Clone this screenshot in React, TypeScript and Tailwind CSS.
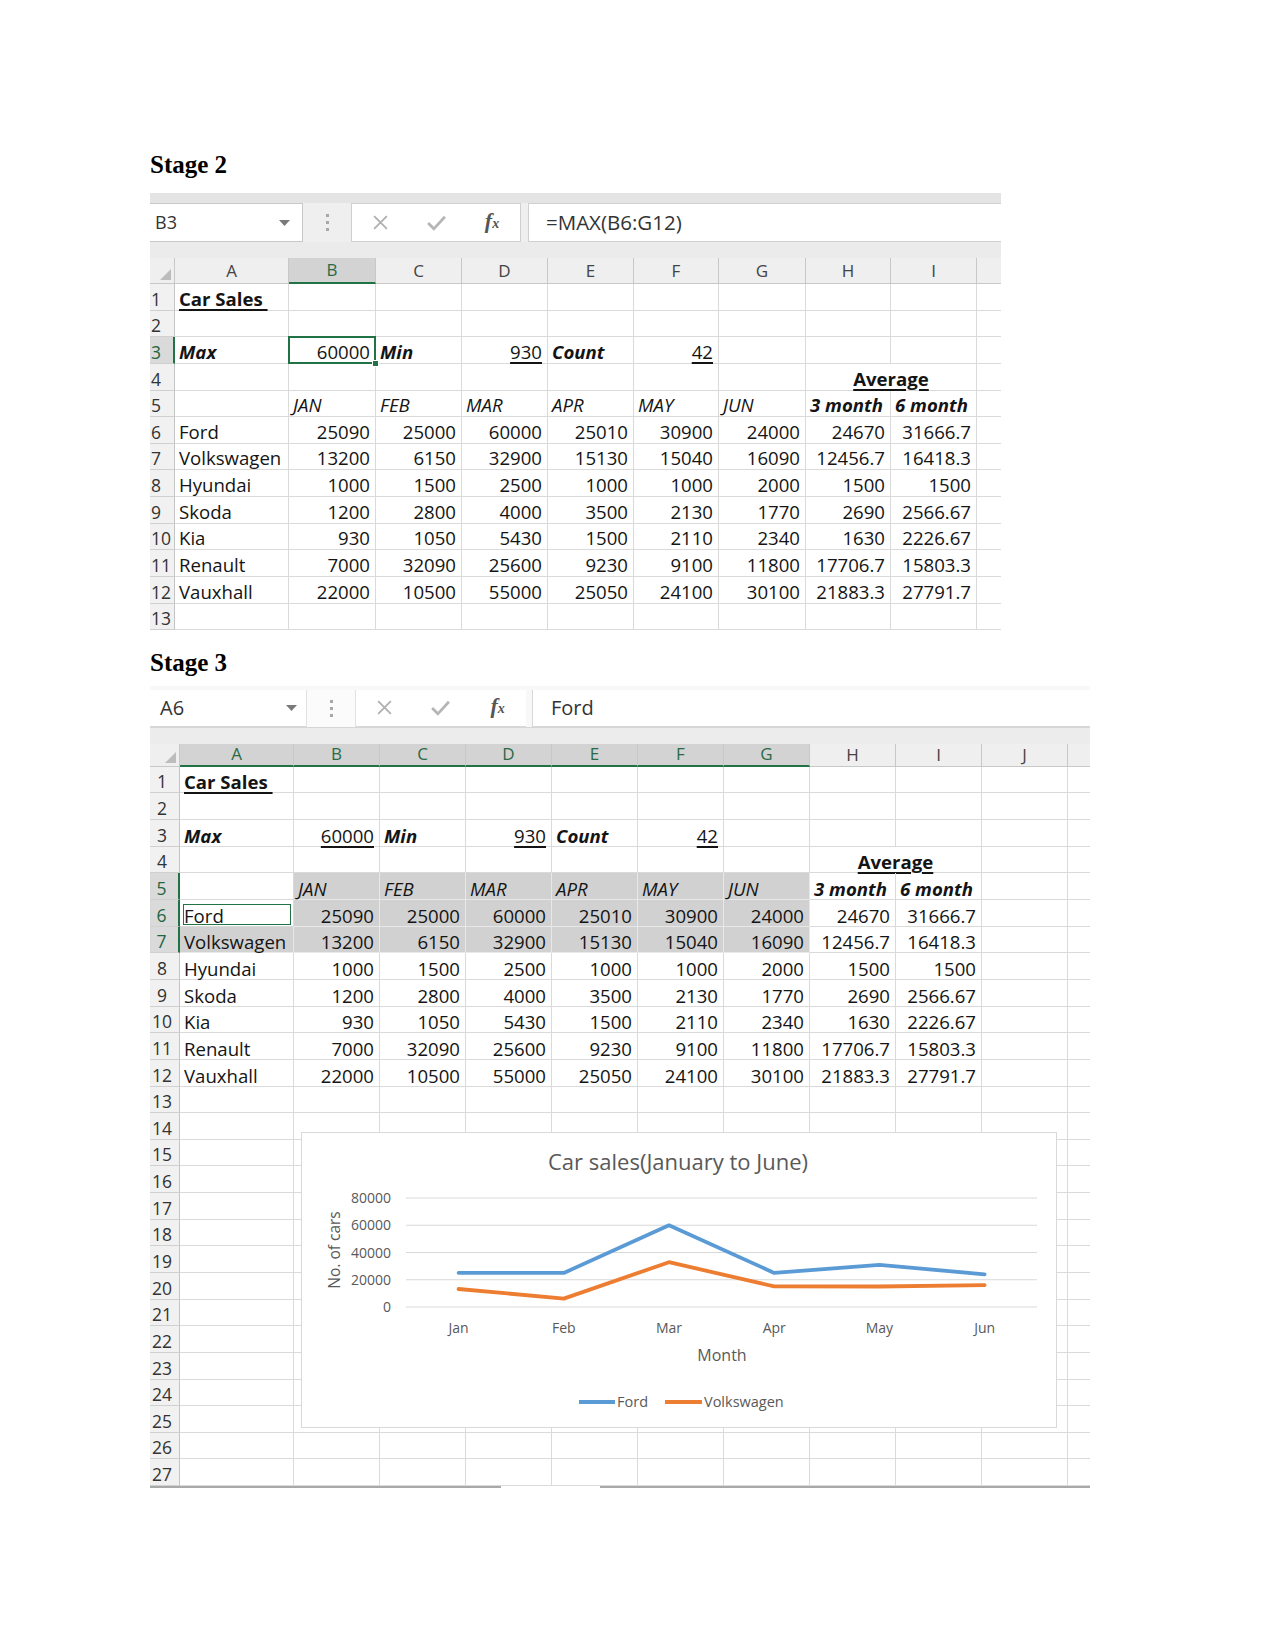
import React from 'react';

type Cell = {
  t?: string;
  a?: 'l' | 'r' | 'c';
  b?: boolean;
  i?: boolean;
  u?: boolean;
  span?: boolean;
  sel?: boolean;
  active?: boolean;
  pick?: boolean;
  extra?: boolean;
};

const months = ['JAN', 'FEB', 'MAR', 'APR', 'MAY', 'JUN'];
const data: [string, number[], string, string][] = [
  ['Ford', [25090, 25000, 60000, 25010, 30900, 24000], '24670', '31666.7'],
  ['Volkswagen', [13200, 6150, 32900, 15130, 15040, 16090], '12456.7', '16418.3'],
  ['Hyundai', [1000, 1500, 2500, 1000, 1000, 2000], '1500', '1500'],
  ['Skoda', [1200, 2800, 4000, 3500, 2130, 1770], '2690', '2566.67'],
  ['Kia', [930, 1050, 5430, 1500, 2110, 2340], '1630', '2226.67'],
  ['Renault', [7000, 32090, 25600, 9230, 9100, 11800], '17706.7', '15803.3'],
  ['Vauxhall', [22000, 10500, 55000, 25050, 24100, 30100], '21883.3', '27791.7'],
];

function buildRows(stage3: boolean): Cell[][] {
  const nData = stage3 ? 10 : 9;
  const fill = (cells: Cell[]) => {
    const r = [...cells];
    let count = cells.reduce((s, c) => s + (c.span ? 2 : 1), 0);
    while (count < nData) {
      r.push({});
      count++;
    }
    r.push({ extra: true });
    return r;
  };
  const rows: Cell[][] = [];
  rows.push(fill([{ t: 'Car Sales ', b: true, u: true }]));
  rows.push(fill([]));
  rows.push(
    fill([
      { t: 'Max', b: true, i: true },
      { t: '60000', a: 'r', u: true, pick: !stage3 },
      { t: 'Min', b: true, i: true },
      { t: '930', a: 'r', u: true },
      { t: 'Count', b: true, i: true },
      { t: '42', a: 'r', u: true },
    ])
  );
  rows.push(fill([{}, {}, {}, {}, {}, {}, {}, { t: 'Average', a: 'c', b: true, u: true, span: true }]));
  rows.push(
    fill([
      {},
      ...months.map((m) => ({ t: m, i: true, sel: stage3 })),
      { t: '3 month', b: true, i: true },
      { t: '6 month', b: true, i: true },
    ])
  );
  data.forEach(([name, nums, a3, a6], idx) => {
    const sel = stage3 && idx < 2;
    rows.push(
      fill([
        { t: name, sel: sel && idx === 1, active: sel && idx === 0 },
        ...nums.map((n) => ({ t: String(n), a: 'r' as const, sel })),
        { t: a3, a: 'r' },
        { t: a6, a: 'r' },
      ])
    );
  });
  rows.push(fill([]));
  if (stage3) for (let k = 14; k <= 27; k++) rows.push(fill([]));
  return rows;
}

function CellView({ c, stage3 }: { c: Cell; stage3: boolean }) {
  const cls = [
    'relative flex items-end whitespace-nowrap border-b text-[18.6px] text-[#141414]',
    stage3 ? 'leading-[21px]' : 'leading-[22px]',
    c.extra ? '' : 'border-r',
    c.span ? 'col-span-2' : '',
    c.sel ? 'bg-[#d1d1d1] border-[#e8e8e8]' : 'border-[#dadada]',
    c.a === 'r' ? 'justify-end pr-[5px]' : c.a === 'c' ? 'justify-center' : 'pl-[4px]',
  ].join(' ');
  const tcls = [
    'whitespace-pre',
    c.b ? 'font-bold' : '',
    c.i ? 'italic' : '',
    c.u ? 'underline decoration-[1.5px] underline-offset-[3px]' : '',
  ].join(' ');
  return (
    <div className={cls}>
      {c.t && <span className={tcls}>{c.t}</span>}
      {c.active && (
        <div className="absolute left-[3px] right-[2px] top-[4px] bottom-[1px] border-[1.5px] border-[#217346]" />
      )}
      {c.pick && (
        <>
          <div className="absolute -left-[1px] -right-[1px] -top-[1px] -bottom-[1px] z-10 border-2 border-[#217346]" />
          <div className="absolute -right-[4px] -bottom-[4px] z-20 h-[7px] w-[7px] border border-white bg-[#217346]" />
        </>
      )}
    </div>
  );
}

function RowHdr({ n, sel, stage3 }: { n: number; sel: boolean; stage3: boolean }) {
  return (
    <div
      className={[
        'flex items-end border-b border-b-[#d0d0d0] text-[17.5px] overflow-hidden',
        stage3 ? 'justify-center pr-[5px] leading-[21px]' : 'pl-[1px] leading-[22px]',
        sel
          ? 'bg-[#dadada] text-[#23653f] border-r-2 border-r-[#217346]'
          : 'bg-[#f1f1f1] text-[#333] border-r border-r-[#c4c4c4]',
      ].join(' ')}
    >
      {n}
    </div>
  );
}

function Corner() {
  return (
    <div className="relative border-r border-b border-[#c8c8c8] bg-[#efefef]">
      <svg className="absolute right-[3px] bottom-[3px]" width="11" height="11">
        <polygon points="11,0 11,11 0,11" fill="#bcbcbc" />
      </svg>
    </div>
  );
}

function Sheet({ stage3 }: { stage3: boolean }) {
  const rows = buildRows(stage3);
  const letters = stage3
    ? ['A', 'B', 'C', 'D', 'E', 'F', 'G', 'H', 'I', 'J']
    : ['A', 'B', 'C', 'D', 'E', 'F', 'G', 'H', 'I'];
  const colsCls = stage3
    ? 'grid-cols-[30px_114px_86px_86px_86px_86px_86px_86px_86px_86px_86px_22px]'
    : 'grid-cols-[25px_114px_87px_86px_86px_86px_85px_87px_85px_86px_24px]';
  const hdrSel = (i: number) => (stage3 ? i <= 6 : i === 1);
  const rowSel = (r: number) => (stage3 ? r >= 5 && r <= 7 : r === 3);
  return (
    <div>
      <div className={`grid ${colsCls} ${stage3 ? 'h-[23px]' : 'h-[26px]'}`}>
        <Corner />
        {letters.map((L, i) => (
          <div
            key={L}
            className={[
              'flex items-center justify-center border-r border-r-[#c8c8c8] text-[17px] leading-[20px]',
              hdrSel(i)
                ? 'bg-[#d3d3d3] text-[#2a6a45] border-b-2 border-b-[#217346]'
                : 'bg-[#efefef] text-[#444] border-b border-b-[#c8c8c8]',
            ].join(' ')}
          >
            {L}
          </div>
        ))}
        <div className="border-b border-b-[#c8c8c8] bg-[#efefef]" />
      </div>
      <div className={`grid ${colsCls} auto-rows-[26.65px]`}>
        {rows.map((row, r) => (
          <React.Fragment key={r}>
            <RowHdr n={r + 1} sel={rowSel(r + 1)} stage3={stage3} />
            {row.map((c, ci) => (
              <CellView key={ci} c={c} stage3={stage3} />
            ))}
          </React.Fragment>
        ))}
      </div>
    </div>
  );
}

function Tri() {
  return (
    <svg width="11" height="6" viewBox="0 0 11 6">
      <polygon points="0,0 11,0 5.5,6" fill="#7a7a7a" />
    </svg>
  );
}

function Dots() {
  return (
    <div className="flex flex-col gap-[4px]">
      <div className="h-[3px] w-[3px] bg-[#a8a8a8]" />
      <div className="h-[3px] w-[3px] bg-[#a8a8a8]" />
      <div className="h-[3px] w-[3px] bg-[#a8a8a8]" />
    </div>
  );
}

function FxIcons() {
  return (
    <div className="grid h-full grid-cols-3 items-center">
      <div className="flex justify-center">
        <svg width="17" height="17" viewBox="0 0 16 16">
          <path d="M2 2 L14 14 M14 2 L2 14" stroke="#b0b0b0" strokeWidth="1.7" fill="none" />
        </svg>
      </div>
      <div className="flex justify-center">
        <svg width="21" height="17" viewBox="0 0 20 16">
          <path d="M2 8.5 L7.5 14 L18 2.5" stroke="#b5b5b5" strokeWidth="2.6" fill="none" />
        </svg>
      </div>
      <div className="flex justify-center">
        <span className="font-['Liberation_Serif',serif] text-[22px] font-bold italic leading-[22px] text-[#555]">
          f<span className="text-[14px]">x</span>
        </span>
      </div>
    </div>
  );
}

function Chart() {
  const xs = [157.6, 262.8, 368, 473.2, 578.4, 683.6];
  const y = (v: number) => 175 - (v * 109) / 80000;
  const ford = [25090, 25000, 60000, 25010, 30900, 24000];
  const vw = [13200, 6150, 32900, 15130, 15040, 16090];
  const pts = (arr: number[]) => arr.map((v, i) => `${xs[i]},${y(v).toFixed(1)}`).join(' ');
  return (
    <div className="absolute left-[151px] top-[388px] h-[296px] w-[756px] border border-[#d9d9d9] bg-white">
      <svg width="754" height="294" className="absolute -left-[1px] -top-[1px] block overflow-visible font-['Open_Sans',sans-serif]">
        <text x="377" y="38" textAnchor="middle" fontSize="22" fill="#595959">
          Car sales(January to June)
        </text>
        {[0, 20000, 40000, 60000, 80000].map((v) => (
          <g key={v}>
            <line x1="105" x2="736" y1={y(v)} y2={y(v)} stroke="#d9d9d9" strokeWidth="1" />
            <text x="90" y={y(v) + 5} textAnchor="end" fontSize="14" fill="#595959">
              {v}
            </text>
          </g>
        ))}
        <text transform="translate(39,118) rotate(-90)" textAnchor="middle" fontSize="15.5" fill="#595959">
          No. of cars
        </text>
        <polyline points={pts(ford)} fill="none" stroke="#5b9bd5" strokeWidth="3.8" strokeLinejoin="round" strokeLinecap="round" />
        <polyline points={pts(vw)} fill="none" stroke="#ed7d31" strokeWidth="3.8" strokeLinejoin="round" strokeLinecap="round" />
        {['Jan', 'Feb', 'Mar', 'Apr', 'May', 'Jun'].map((m, i) => (
          <text key={m} x={xs[i]} y="201" textAnchor="middle" fontSize="14" fill="#595959">
            {m}
          </text>
        ))}
        <text x="421" y="228.5" textAnchor="middle" fontSize="16" fill="#595959">
          Month
        </text>
        <line x1="278" x2="314" y1="270" y2="270" stroke="#5b9bd5" strokeWidth="3.8" />
        <text x="316" y="275" fontSize="14.5" fill="#595959">
          Ford
        </text>
        <line x1="364" x2="401" y1="270" y2="270" stroke="#ed7d31" strokeWidth="3.8" />
        <text x="403" y="275" fontSize="14.5" fill="#595959">
          Volkswagen
        </text>
      </svg>
    </div>
  );
}

export default function App() {
  return (
    <div className="min-h-[1650px] bg-white pl-[150px] pt-[152px] font-['Open_Sans',sans-serif]">
      <div className="font-['Liberation_Serif',serif] text-[25px] font-bold leading-[25px] text-black">Stage 2</div>

      {/* Stage 2 toolbar */}
      <div className="mt-[16px] w-[851px]">
        <div className="h-[10px] bg-[#e4e4e4]" />
        <div className="flex h-[39px] bg-[#efefef]">
          <div className="flex w-[153px] items-center justify-between border border-l-0 border-[#c8c8c8] bg-white pl-[5px] pr-[12px] text-[18px] text-[#333]">
            <span>B3</span>
            <Tri />
          </div>
          <div className="flex w-[48px] items-center justify-center">
            <Dots />
          </div>
          <div className="w-[170px] border border-[#d0d0d0] bg-white">
            <FxIcons />
          </div>
          <div className="w-[7px]" />
          <div className="flex flex-1 items-center border border-r-0 border-[#d0d0d0] bg-white pl-[17px] text-[20.5px] text-[#333]">
            =MAX(B6:G12)
          </div>
        </div>
        <div className="h-[16px] bg-[#ebebeb]" />
      </div>
      <div className="w-[851px]">
        <Sheet stage3={false} />
      </div>

      <div className="mt-[19.5px] font-['Liberation_Serif',serif] text-[25px] font-bold leading-[25px] text-black">Stage 3</div>

      {/* Stage 3 toolbar */}
      <div className="mt-[11px] w-[940px]">
        <div className="h-[4px] bg-[#f8f8f8]" />
        <div className="flex h-[37px] bg-[#f8f8f8]">
          <div className="flex w-[156px] items-center justify-between border-b border-[#d8d8d8] bg-white pl-[10px] pr-[9px] text-[20px] text-[#333]">
            <span>A6</span>
            <Tri />
          </div>
          <div className="flex w-[50px] items-center justify-center border-x border-[#e2e2e2] bg-[#fbfbfb]">
            <Dots />
          </div>
          <div className="w-[170px] border-b border-[#d8d8d8] bg-white">
            <FxIcons />
          </div>
          <div className="w-[6px]" />
          <div className="flex flex-1 items-center border-b border-l border-[#d8d8d8] bg-white pl-[18px] text-[20px] text-[#333]">
            Ford
          </div>
        </div>
        <div className="h-[17px] border-t border-[#d6d6d6] bg-[#ececec]" />
      </div>
      <div className="relative w-[940px]">
        <Sheet stage3={true} />
        <Chart />
      </div>
      <div className="flex h-[2px] w-[940px]">
        <div className="w-[351px] bg-[#a9a9a9]" />
        <div className="w-[99px]" />
        <div className="w-[490px] bg-[#a9a9a9]" />
      </div>
    </div>
  );
}
